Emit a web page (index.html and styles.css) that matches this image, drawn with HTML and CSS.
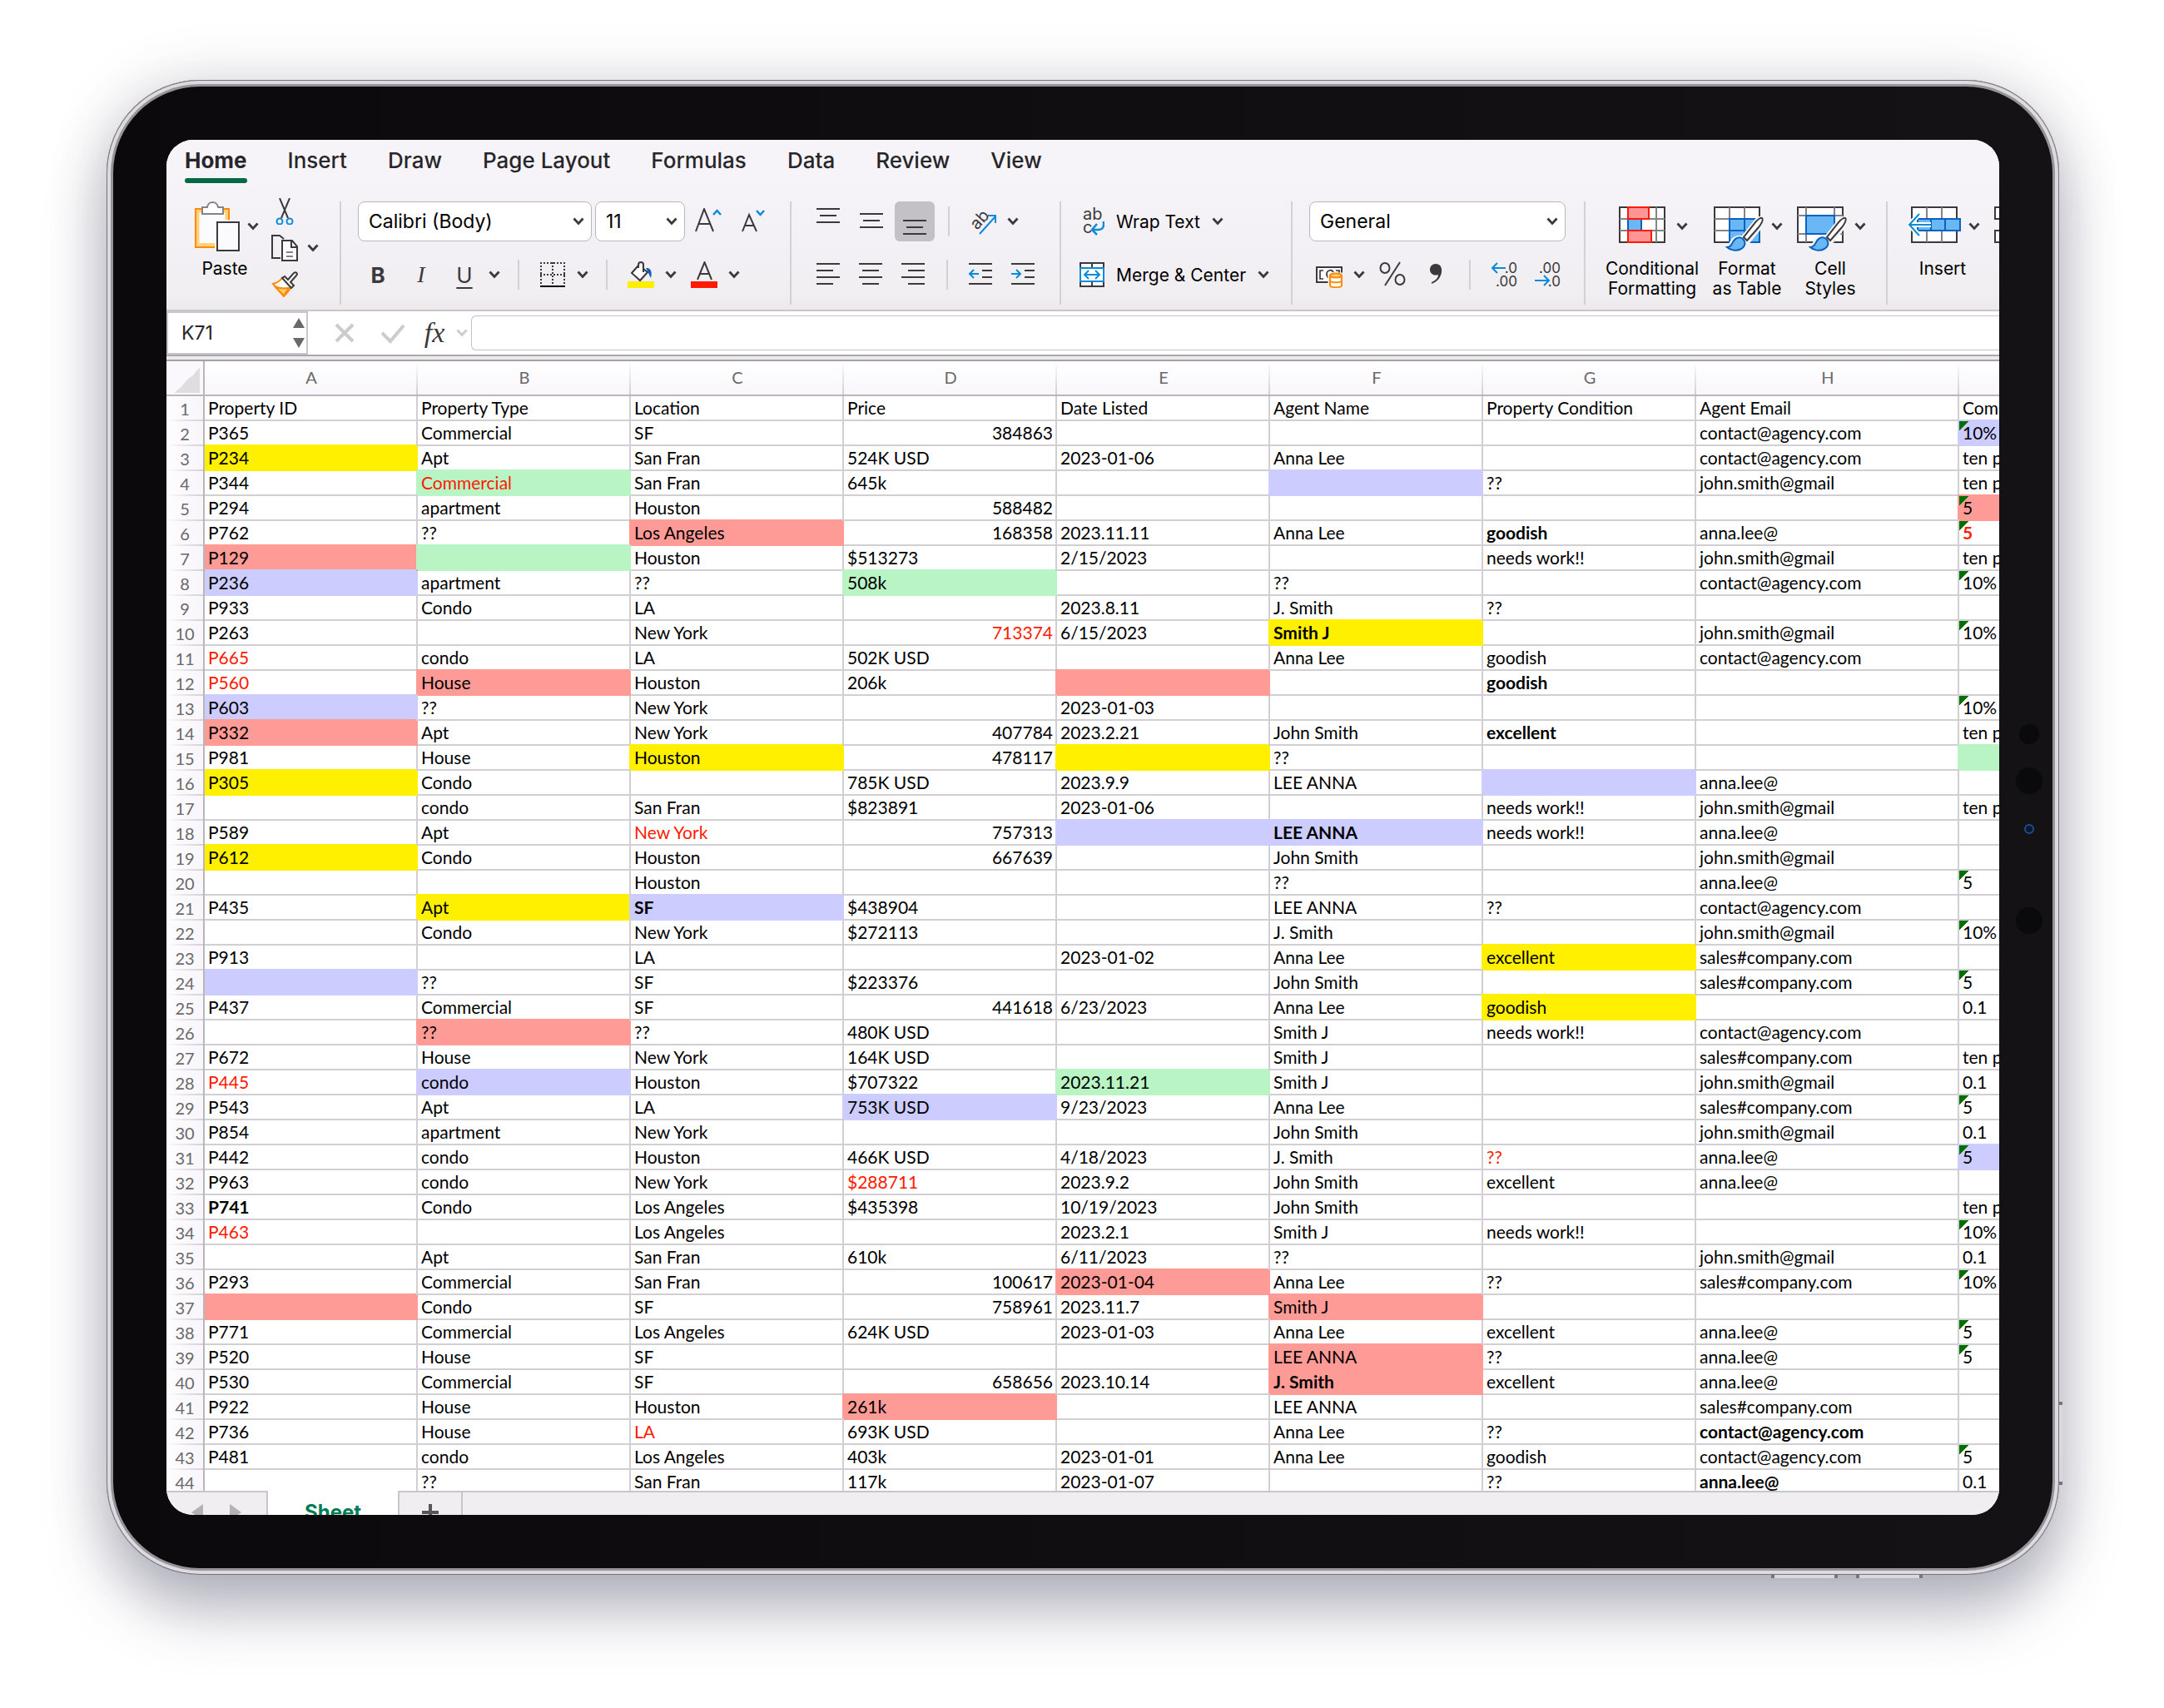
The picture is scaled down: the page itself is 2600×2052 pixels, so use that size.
FILE: index.html
```html
<!DOCTYPE html>
<html lang="en">
<head>
<meta charset="utf-8">
<title>Property listings</title>
<link rel="stylesheet" href="styles.css">
</head>
<body>
<svg width="0" height="0" class="defs" aria-hidden="true">
  <symbol id="chev" viewBox="0 0 14 10"><path d="M1.500 1.500 7 7.500 12.500 1.500" fill="none" stroke="currentColor" stroke-width="2.800"/></symbol>
  <symbol id="brush" viewBox="0 0 46 42">
    <path d="M45 1c2 3-1 8-4 12L27 30l-5-5L38 5c3-3 5-5 7-4z" fill="#fff" stroke="#f5f3f6" stroke-width="6"/>
    <path d="M1 37c5 0 5-3 7-6 3-6 9-7 13-4 4 4 3 9-2 12-6 3-14 2-18-2z" fill="#fff" stroke="#f5f3f6" stroke-width="5"/>
    <path d="M44 2c2 2-1 7-4 11L26 29l-4-4L37 6c3-3 6-5 7-4z" fill="#fff" stroke="#3b393c" stroke-width="2"/>
    <path d="M2 37c5 0 5-3 7-6 3-6 8-7 12-4 4 4 3 9-2 12-6 3-13 2-17-2z" fill="#69b8f5" stroke="#0a62c0" stroke-width="2"/>
  </symbol>
</svg>
<div class="device">
  <div class="sensors"><i></i><i class="big"></i><i class="led"></i><i class="big"></i></div>
  <div class="key key-side"></div>
  <div class="key key-down"></div>
  <div class="key key-up"></div>
  <main class="app">
    <nav class="tabs" aria-label="Ribbon">
      <button class="tab active">Home</button>
      <button class="tab">Insert</button>
      <button class="tab">Draw</button>
      <button class="tab">Page Layout</button>
      <button class="tab">Formulas</button>
      <button class="tab">Data</button>
      <button class="tab">Review</button>
      <button class="tab">View</button>
    </nav>

    <div class="ribbon">
      <section class="group" aria-label="Clipboard">
        <button class="big-tool">
          <span class="big-icon">
            <svg width="56" height="60" viewBox="0 0 56 60">
              <path d="M3 9h40v46H3z" fill="#fbfafc"/>
              <path d="M10 11.500H5.500v40.500h20.500M36 11.500h4.500V22" fill="none" stroke="#ffd27a" stroke-width="4"/>
              <path d="M10 9H3v46h23M36 9h7v13" fill="none" stroke="#ff8a00" stroke-width="2"/>
              <path d="M11 15V7h6c1-8 12-8 13 0h6v8z" fill="#fff" stroke="#858388" stroke-width="2"/>
              <path d="M29 25h26v34H29z" fill="#fbfafc" stroke="#3b393c" stroke-width="2"/>
            </svg>
            <svg class="chev"><use href="#chev"/></svg>
          </span>
          <span class="big-label">Paste</span>
        </button>
        <div class="stack">
          <button class="mini" aria-label="Cut">
            <svg width="32" height="32" viewBox="0 0 32 32" fill="none"><path d="M10 0 20 24M22 0 12 24" stroke="#3b393c" stroke-width="2"/><circle cx="10" cy="28" r="3.500" stroke="#0a8ad8" stroke-width="2"/><circle cx="22" cy="28" r="3.500" stroke="#0a8ad8" stroke-width="2"/></svg>
          </button>
          <span class="split"><button class="mini" aria-label="Copy">
            <svg width="32" height="32" viewBox="0 0 32 32" fill="#fbfafc" stroke="#3b393c" stroke-width="2"><path d="M11 28H1V1h9l5 4" fill="none"/><path d="M13 7h12l6 7v17H13z"/><path d="M24 7v8h7" fill="none"/><path d="M18 21h8M18 26h8" stroke="#858388"/></svg>
          </button><button class="drop" aria-label="Copy options"><svg class="chev"><use href="#chev"/></svg></button></span>
          <button class="mini" aria-label="Format painter">
            <svg width="32" height="32" viewBox="0 0 32 32"><path d="M13 8C10 12 6 14 2 15l13 15c3-3 7-7 9-12z" fill="#fff" stroke="#ff8a00" stroke-width="2"/><path d="M4 18c4 2 10 3 17 2l-6 9z" fill="#ffd27a" stroke="#ff8a00" stroke-width="2"/><path d="M13 8l3-2 4 4 7-8c3-2 5 1 3 3l-7 8 4 4-3 3z" fill="#fff" stroke="#3b393c" stroke-width="2"/></svg>
          </button>
        </div>
      </section>

      <section class="group rows font" aria-label="Font">
        <div class="row">
          <label class="pick font-name"><select aria-label="Font"><option>Calibri (Body)</option></select><svg class="chev"><use href="#chev"/></svg></label>
          <label class="pick font-size"><select aria-label="Font size"><option>11</option></select><svg class="chev"><use href="#chev"/></svg></label>
          <button class="tool" aria-label="Increase font size"><svg width="32" height="32" viewBox="0 0 32 32" fill="none" stroke="#3b393c" stroke-width="2"><path d="M1 28 11 1l11 27M5 19h13"/><path d="M22 8l4.500-5L31 8" stroke="#0a8ad8" stroke-width="2.500"/></svg></button>
          <button class="tool" aria-label="Decrease font size"><svg width="32" height="32" viewBox="0 0 32 32" fill="none" stroke="#3b393c" stroke-width="2"><path d="M5 28l8-20 9 20M8 21h11"/><path d="M22 3l4.500 5L31 3" stroke="#0a8ad8" stroke-width="2.500"/></svg></button>
        </div>
        <div class="row">
          <button class="tool glyph bold">B</button>
          <button class="tool glyph ital">I</button>
          <span class="split"><button class="tool glyph under">U</button><button class="drop" aria-label="Underline options"><svg class="chev"><use href="#chev"/></svg></button></span>
          <span class="bar"></span>
          <span class="split"><button class="tool" aria-label="Borders"><svg width="32" height="32" viewBox="0 0 32 32" fill="none" stroke="#3b393c" stroke-width="2"><path d="M1 2h30M1 16h30M2 1v26M16 1v26M30 1v26" stroke-dasharray="2 2"/><path d="M1 30h30" stroke="#000"/></svg></button><button class="drop" aria-label="Border options"><svg class="chev"><use href="#chev"/></svg></button></span>
          <span class="bar"></span>
          <span class="split"><button class="tool" aria-label="Fill colour"><svg width="32" height="32" viewBox="0 0 32 32"><path d="M0 24h32v8H0z" fill="#ffee00"/><path d="M22 8c6-1 8 5 6 12-2-3-3-7-6-12z" fill="#0a62c0"/><path d="M13 5 5 14l10 9 9-10-5-4" fill="#fff" stroke="#3b393c" stroke-width="2"/><path d="M13 8V4c0-4 6-4 6 0v9" fill="none" stroke="#3b393c" stroke-width="2"/></svg></button><button class="drop" aria-label="Fill options"><svg class="chev"><use href="#chev"/></svg></button></span>
          <span class="split"><button class="tool" aria-label="Font colour"><svg width="32" height="32" viewBox="0 0 32 32"><path d="M0 24h32v8H0z" fill="#ff1a00"/><path d="M8 22 16.500 1 25 22M11 15h11" fill="none" stroke="#3b393c" stroke-width="2"/></svg></button><button class="drop" aria-label="Font colour options"><svg class="chev"><use href="#chev"/></svg></button></span>
        </div>
      </section>

      <section class="group rows align" aria-label="Alignment">
        <div class="row">
          <button class="tool" aria-label="Top align"><svg class="lines" viewBox="0 0 28 32"><path d="M0 1h28M4 9h20M0 17h28"/></svg></button>
          <button class="tool" aria-label="Middle align"><svg class="lines" viewBox="0 0 28 32"><path d="M0 7h28M4 15h20M0 23h28"/></svg></button>
          <button class="tool pressed" aria-label="Bottom align" aria-pressed="true"><svg class="lines" viewBox="0 0 28 32"><path d="M0 15h28M4 23h20M0 31h28"/></svg></button>
          <span class="bar"></span>
          <span class="split"><button class="tool" aria-label="Orientation"><svg width="32" height="32" viewBox="0 0 32 32" class="slant"><text x="0" y="0" transform="translate(9 27) rotate(-48)">ab</text><path d="M12 31 31 10M22 9h9v9" fill="none" stroke="#0a8ad8" stroke-width="2"/></svg></button><button class="drop" aria-label="Orientation options"><svg class="chev"><use href="#chev"/></svg></button></span>
        </div>
        <div class="row">
          <button class="tool" aria-label="Align left"><svg class="lines" viewBox="0 0 28 32"><path d="M0 3h28M0 11h20M0 19h28M0 27h20"/></svg></button>
          <button class="tool" aria-label="Align centre"><svg class="lines" viewBox="0 0 28 32"><path d="M0 3h28M4 11h20M0 19h28M4 27h20"/></svg></button>
          <button class="tool" aria-label="Align right"><svg class="lines" viewBox="0 0 28 32"><path d="M0 3h28M8 11h20M0 19h28M8 27h20"/></svg></button>
          <span class="bar"></span>
          <button class="tool" aria-label="Decrease indent"><svg class="lines" viewBox="0 0 28 32"><path d="M0 3h28M16 11h12M16 19h12M0 27h28"/><path class="blue" d="M12 15H1M6 10l-5 5 5 5"/></svg></button>
          <button class="tool" aria-label="Increase indent"><svg class="lines" viewBox="0 0 28 32"><path d="M0 3h28M16 11h12M16 19h12M0 27h28"/><path class="blue" d="M0 15h11M6 10l5 5-5 5"/></svg></button>
        </div>
      </section>

      <section class="group rows wrap" aria-label="Wrapping">
        <div class="row">
          <button class="wide"><svg width="32" height="34" viewBox="0 0 32 34" class="abc"><text x="6" y="15">ab</text><text x="6" y="31">c</text><path d="M31 17v4c0 4-3 6-6 6h-7M23 20l-6 7 6 6" fill="none" stroke="#0a8ad8" stroke-width="2.500"/></svg>Wrap Text<svg class="chev"><use href="#chev"/></svg></button>
        </div>
        <div class="row">
          <button class="wide"><svg width="32" height="32" viewBox="0 0 32 32" fill="#fff" stroke="#3b393c" stroke-width="2"><path d="M3 2h28v28H3zM17 2v28"/><path d="M3 8h28v16H3zM8 16h18M13 11l-5 5 5 5M21 11l5 5-5 5" stroke="#0a8ad8"/></svg>Merge &amp; Center<svg class="chev"><use href="#chev"/></svg></button>
        </div>
      </section>

      <section class="group rows number-group" aria-label="Number">
        <div class="row">
          <label class="pick number-format"><select aria-label="Number format"><option>General</option></select><svg class="chev"><use href="#chev"/></svg></label>
        </div>
        <div class="row">
          <span class="split"><button class="tool" aria-label="Currency"><svg width="32" height="32" viewBox="0 0 32 32" fill="none" stroke="#3b393c" stroke-width="2"><path d="M1 7h30v18H1z" fill="#fbfafc"/><path d="M9 11H5v10h4M16 20c-4-2-4-8 0-9 2-1 4 0 5 2M24 11h4v3" stroke-width="1.700"/><path d="M17 16v13c0 3 14 3 14 0V16z" stroke="#f5f3f6" stroke-width="5"/><path d="M17 17v12c0 3 14 3 14 0V17" stroke="#ff8a00" fill="#fff"/><path d="M17 23c0 3 14 3 14 0" stroke="#ff8a00"/><ellipse cx="24" cy="17" rx="7" ry="2.500" stroke="#ff8a00" fill="#ffd27a"/></svg></button><button class="drop" aria-label="Currency options"><svg class="chev"><use href="#chev"/></svg></button></span>
          <button class="tool" aria-label="Percent"><svg width="32" height="32" viewBox="0 0 32 32" fill="none" stroke="#3b393c" stroke-width="2"><ellipse cx="7" cy="8" rx="5.500" ry="6"/><ellipse cx="25" cy="22" rx="5.500" ry="6"/><path d="M25 1 7 29"/></svg></button>
          <button class="tool" aria-label="Comma style"><svg width="32" height="32" viewBox="0 0 32 32"><path d="M16 3c5 0 8 4 7 10-1 7-6 12-12 14v-2c5-2 8-5 8-9-6 2-10-2-10-6 0-4 3-7 7-7z" fill="#3b393c"/></svg></button>
          <span class="bar"></span>
          <button class="tool" aria-label="Increase decimals"><svg width="32" height="32" viewBox="0 0 32 32" class="dec"><text x="32" y="14">.0</text><text x="32" y="30">.00</text><path d="M18 8H3M8 2 2 8l6 6"/></svg></button>
          <button class="tool" aria-label="Decrease decimals"><svg width="32" height="32" viewBox="0 0 32 32" class="dec"><text x="32" y="14">.00</text><text x="32" y="30">.0</text><path d="M1 23h16M12 17l6 6-6 6"/></svg></button>
        </div>
      </section>

      <section class="group styles" aria-label="Styles">
        <button class="big-tool cond">
          <span class="big-icon">
            <svg width="60" height="60" viewBox="0 0 60 60" fill="#fff"><path d="M1 7h54v42H1z" stroke="#3b393c" stroke-width="2"/><path d="M1 21h54M1 35h54M11 7v42M45 7v42M36 7v14M36 35v14" stroke="#858388" stroke-width="2"/><path d="M28 22h16v12H28z"/><path d="M11 7h25v14H11zM11 35h28v14H11z" fill="#ff9497" stroke="#ff1a00" stroke-width="2"/><path d="M11 22h16v12H11z" fill="#69b8f5"/><path d="M11 22v12M27 22v12" stroke="#0a62c0" stroke-width="2"/></svg>
            <svg class="chev"><use href="#chev"/></svg>
          </span>
          <span class="big-label">Conditional<br>Formatting</span>
        </button>
        <button class="big-tool">
          <span class="big-icon">
            <svg width="60" height="60" viewBox="0 0 60 60" fill="#fff"><path d="M1 7h54v42H1z" stroke="#3b393c" stroke-width="2"/><path d="M1 21h54M1 35h18M19 7v42M37 7v14" stroke="#858388" stroke-width="2"/><path d="M19 21h36v28H19zM19 35h36M37 21v28" fill="#69b8f5" stroke="#0a62c0" stroke-width="2"/><use href="#brush" x="14" y="18" width="46" height="42"/></svg>
            <svg class="chev"><use href="#chev"/></svg>
          </span>
          <span class="big-label">Format<br>as Table</span>
        </button>
        <button class="big-tool">
          <span class="big-icon">
            <svg width="60" height="60" viewBox="0 0 60 60" fill="#fff"><path d="M1 7h54v42H1z" stroke="#3b393c" stroke-width="2"/><path d="M1 17h54M1 39h54M11 7v42M45 7v42" stroke="#858388" stroke-width="2"/><path d="M11 17h34v22H11z" fill="#69b8f5" stroke="#0a62c0" stroke-width="2"/><use href="#brush" x="14" y="18" width="46" height="42"/></svg>
            <svg class="chev"><use href="#chev"/></svg>
          </span>
          <span class="big-label">Cell<br>Styles</span>
        </button>
      </section>

      <section class="group last" aria-label="Cells">
        <button class="big-tool">
          <span class="big-icon">
            <svg width="64" height="60" viewBox="0 0 64 60" fill="#fff"><path d="M5 7h54v42H5z" stroke="#3b393c" stroke-width="2"/><path d="M23 7v42M41 7v42" stroke="#858388" stroke-width="2"/><path d="M12 21h51v14H12zM28 21v14M45 21v14" fill="#69b8f5" stroke="#0a62c0" stroke-width="2"/><path d="M28 28H3M14 15 2 28l12 13" fill="none" stroke="#fff" stroke-width="6"/><path d="M28 28H3M14 15 2 28l12 13" fill="none" stroke="#0a8ad8" stroke-width="2"/></svg>
            <svg class="chev"><use href="#chev"/></svg>
          </span>
          <span class="big-label">Insert</span>
        </button>
        <button class="big-tool next" aria-label="Delete">
          <span class="big-icon">
            <svg width="64" height="60" viewBox="0 0 64 60" fill="#fff" stroke="#3b393c" stroke-width="2"><path d="M1 7h54v14H1zM1 35h54v14H1z"/></svg>
          </span>
        </button>
      </section>
    </div>

    <div class="formula-bar">
      <label class="name-box"><input aria-label="Name box" value="K71"><svg width="14" height="36" viewBox="0 0 14 36" fill="#6a686c"><path d="M7 0l7 12H0zM0 24h14L7 36z"/></svg></label>
      <button class="fx-tool" aria-label="Cancel"><svg width="28" height="28" viewBox="0 0 28 28"><path d="M4 4l20 20M24 4 4 24" stroke="#cdcbce" stroke-width="4"/></svg></button>
      <button class="fx-tool" aria-label="Enter"><svg width="28" height="28" viewBox="0 0 28 28"><path d="M1 14l10 10L27 5" fill="none" stroke="#cdcbce" stroke-width="4"/></svg></button>
      <button class="fx">fx</button>
      <svg class="chev pale"><use href="#chev"/></svg>
      <input class="formula" aria-label="Formula">
    </div>

    <div class="sheet">
      <table>
        <colgroup><col class="c-num"><col><col><col><col><col><col><col><col class="c-mail"><col></colgroup>
        <thead><tr><th class="corner"></th><th>A</th><th>B</th><th>C</th><th>D</th><th>E</th><th>F</th><th>G</th><th>H</th><th></th></tr></thead>
        <tbody id="rows"></tbody>
      </table>
    </div>

    <div class="sheet-tabs">
      <div class="steps"><button aria-label="Previous sheet"><svg width="14" height="20"><path d="M14 0v20L0 10z"/></svg></button><button aria-label="Next sheet"><svg width="14" height="20"><path d="M0 0v20l14-10z"/></svg></button></div>
      <button class="sheet-tab">Sheet</button>
      <button class="add" aria-label="Add sheet"><svg width="20" height="20"><path d="M10 0v20M0 10h20" stroke="#58565a" stroke-width="4"/></svg></button>
    </div>
  </main>
</div>
<script src="rows.js"></script>
</body>
</html>
```
FILE: rows.js
```js
// One line per sheet row, cells split by ";".
// After "|": y/g/p/l = yellow, green, pink, lavender fill; r = red text; b = bold.
// C, J and S stand for the three addresses that repeat; T for "ten percent".
const data = `Property ID;Property Type;Location;Price;Date Listed;Agent Name;Property Condition;Agent Email;Commission
P365;Commercial;SF;384863;;;;C;10%|l
P234|y;Apt;San Fran;524K USD;2023-01-06;Anna Lee;;C;T
P344;Commercial|gr;San Fran;645k;;|l;??;J;T
P294;apartment;Houston;588482;;;;;5|p
P762;??;Los Angeles|p;168358;2023.11.11;Anna Lee;goodish|b;anna.lee@;5|rb
P129|p;|g;Houston;$513273;2/15/2023;;needs work!!;J;T
P236|l;apartment;??;508k|g;;??;;C;10%
P933;Condo;LA;;2023.8.11;J. Smith;??;;
P263;;New York;713374|r;6/15/2023;Smith J|yb;;J;10%
P665|r;condo;LA;502K USD;;Anna Lee;goodish;C;
P560|r;House|p;Houston;206k;|p;;goodish|b;;
P603|l;??;New York;;2023-01-03;;;;10%
P332|p;Apt;New York;407784;2023.2.21;John Smith;excellent|b;;T
P981;House;Houston|y;478117;|y;??;;;|g
P305|y;Condo;;785K USD;2023.9.9;LEE ANNA;|l;anna.lee@;
;condo;San Fran;$823891;2023-01-06;;needs work!!;J;T
P589;Apt;New York|r;757313;|l;LEE ANNA|lb;needs work!!;anna.lee@;
P612|y;Condo;Houston;667639;;John Smith;;J;
;;Houston;;;??;;anna.lee@;5
P435;Apt|y;SF|lb;$438904;;LEE ANNA;??;C;
;Condo;New York;$272113;;J. Smith;;J;10%
P913;;LA;;2023-01-02;Anna Lee;excellent|y;S;
|l;??;SF;$223376;;John Smith;;S;5
P437;Commercial;SF;441618;6/23/2023;Anna Lee;goodish|y;;0.1
;??|p;??;480K USD;;Smith J;needs work!!;C;
P672;House;New York;164K USD;;Smith J;;S;T
P445|r;condo|l;Houston;$707322;2023.11.21|g;Smith J;;J;0.1
P543;Apt;LA;753K USD|l;9/23/2023;Anna Lee;;S;5
P854;apartment;New York;;;John Smith;;J;0.1
P442;condo;Houston;466K USD;4/18/2023;J. Smith;??|r;anna.lee@;5|l
P963;condo;New York;$288711|r;2023.9.2;John Smith;excellent;anna.lee@;
P741|b;Condo;Los Angeles;$435398;10/19/2023;John Smith;;;T
P463|r;;Los Angeles;;2023.2.1;Smith J;needs work!!;;10%
;Apt;San Fran;610k;6/11/2023;??;;J;0.1
P293;Commercial;San Fran;100617;2023-01-04|p;Anna Lee;??;S;10%
|p;Condo;SF;758961;2023.11.7;Smith J|p;;;
P771;Commercial;Los Angeles;624K USD;2023-01-03;Anna Lee;excellent;anna.lee@;5
P520;House;SF;;;LEE ANNA|p;??;anna.lee@;5
P530;Commercial;SF;658656;2023.10.14;J. Smith|pb;excellent;anna.lee@;
P922;House;Houston;261k|p;;LEE ANNA;;S;
P736;House;LA|r;693K USD;;Anna Lee;??;C|b;
P481;condo;Los Angeles;403k;2023-01-01;Anna Lee;goodish;C;5
;??;San Fran;117k;2023-01-07;;??;anna.lee@|b;0.1`;

const short = { C: 'contact@agency.com', J: 'john.smith@gmail', S: 'sales#company.com', T: 'ten percent' };
const names = { y: 'yellow', g: 'green', p: 'pink', l: 'lavender', r: 'red', b: 'strong' };
const body = document.getElementById('rows');

data.split('\n').forEach((line, i) => {
  const tr = body.insertRow();
  const head = document.createElement('th');
  head.scope = 'row';
  head.textContent = i + 1;
  tr.append(head);
  line.split(';').forEach((cell, col) => {
    const [text, marks = ''] = cell.split('|');
    const td = tr.insertCell();
    td.textContent = short[text] || text;
    for (const m of marks) td.classList.add(names[m]);
    if (col === 3 && /^\d+$/.test(text)) td.classList.add('number');
    if (col === 8 && /^(10%|5)$/.test(text)) td.classList.add('flag');
  });
});
```
FILE: styles.css
```css
* { box-sizing: border-box; }

body {
  margin: 0;
  height: 100vh;
  padding: 96px 126px 160px 128px;
  display: flex;
  background: #fff;
  font-family: Inter, "Liberation Sans", sans-serif;
  font-size: 21px;
  color: #000;
  overflow: hidden;
}
button { border: 0; background: none; padding: 0; font: inherit; color: inherit; }
input, select { font: inherit; color: inherit; border: 0; outline: 0; background: none; }
.defs { position: absolute; }

/* tablet body */
.device {
  position: relative;
  flex: 1;
  min-width: 0;
  padding: 72px;
  border-radius: 112px;
  background: linear-gradient(90deg, #0b090c, #141214);
  box-shadow:
    inset 0 0 0 1px #77757b,
    inset 0 0 0 5px #dddbdf,
    inset 0 0 0 8px #96949a,
    0 0 70px rgba(60, 60, 80, .18),
    0 44px 70px rgba(60, 60, 90, .34);
  display: flex;
}
.sensors {
  position: absolute;
  right: 20px;
  top: 774px;
  width: 32px;
  display: flex;
  flex-direction: column;
  align-items: center;
  gap: 28px;
}
.sensors i { width: 24px; height: 24px; border-radius: 50%; background: #0a090b; }
.sensors .big { width: 32px; height: 32px; }
.sensors .led { width: 12px; height: 12px; border: 2px solid #17508a; background: #0a1830; margin: 8px 0 60px; }
.key { position: absolute; background: #d9d7dc; border: solid #77757b; border-width: 0 4px; }
.key-side { right: -4px; bottom: 108px; width: 4px; height: 100px; border-width: 4px 0; }
.key-down, .key-up { bottom: -4px; height: 4px; width: 80px; }
.key-down { right: 266px; }
.key-up { right: 164px; }

.app {
  flex: 1;
  min-width: 0;
  display: flex;
  flex-direction: column;
  border-radius: 32px;
  overflow: hidden;
  background: #fff;
}

/* ribbon tabs */
.tabs { flex: none; display: flex; gap: 49px; padding: 7px 22px 0; height: 56px; background: #f6f4f8; }
.tab { height: 45px; padding-bottom: 9px; font-size: 26px; line-height: 36px; font-weight: 500; color: #28262a; white-space: nowrap; position: relative; }
.tab.active { font-weight: 700; }
.tab.active::after { content: ""; position: absolute; left: 0; right: 0; bottom: 0; height: 6px; border-radius: 3px; background: #006a43; }

/* ribbon */
.ribbon {
  flex: none;
  display: flex;
  align-items: flex-start;
  padding: 18px 0 6px 24px;
  background: linear-gradient(#f5f3f7, #f0eef1 90%, #ebe9ec);
  border-bottom: 2px solid #c8c6ca;
  overflow: hidden;
}
.group { flex: none; display: flex; height: 124px; padding-right: 20px; margin-right: 20px; border-right: 2px solid #d3d1d5; }
.group.font { width: 521px; }
.group.align { width: 304px; }
.group.wrap { width: 258px; }
.group.number-group { width: 332px; }
.group.styles { width: 343px; padding: 0; }
.group.last { border: 0; }
.rows { flex-direction: column; gap: 16px; }
.row { display: flex; align-items: center; gap: 4px; height: 48px; }
.split { display: flex; align-items: center; }
.tool { width: 48px; height: 48px; display: flex; align-items: center; justify-content: center; border-radius: 6px; }
.tool.pressed { background: #c3c1c5; }
.drop { width: 24px; height: 32px; display: flex; align-items: center; justify-content: center; }
.chev { width: 14px; height: 10px; flex: none; color: #3b393c; }
.pale { color: #cdcbce; }
.bar { width: 2px; height: 36px; margin: 0 12px; background: #d3d1d5; }

.stack { display: flex; flex-direction: column; justify-content: space-between; height: 124px; margin: -6px 0 0; align-items: flex-start; }
.mini { width: 36px; height: 36px; display: flex; align-items: center; justify-content: center; }
.stack .drop { margin-left: 4px; }

.big-tool { width: 100px; display: flex; flex-direction: column; align-items: center; }
.big-tool.cond { width: 128px; }
.big-tool.next { align-items: flex-start; margin-left: 8px; }
.big-icon { display: flex; align-items: center; gap: 9px; padding-right: 5px; height: 60px; }
.big-label { margin-top: 9px; padding-right: 8px; line-height: 24px; text-align: center; white-space: nowrap; }

.pick { position: relative; display: flex; align-items: center; height: 48px; background: #fff; border: 1px solid #b9b7bb; border-radius: 8px; }
.pick select { appearance: none; width: 100%; height: 44px; padding: 0 12px; font-size: 23px; }
.pick .chev { position: absolute; right: 8px; pointer-events: none; }
.font-name { width: 281px; }
.font-size { width: 108px; }
.number-format { width: 308px; }

.glyph { font-size: 26px; color: #3b393c; }
.bold { font-weight: 700; }
.ital { font-family: "Liberation Serif", serif; font-style: italic; font-size: 28px; }
.under { text-decoration: underline; text-underline-offset: 5px; }
.lines { width: 28px; height: 32px; fill: none; stroke: #3b393c; stroke-width: 2; }
.lines .blue { stroke: #0a8ad8; }
.slant text, .abc text { font-size: 20px; fill: #3b393c; }
.dec text { font-size: 17px; fill: #3b393c; text-anchor: end; }
.dec path { fill: none; stroke: #0a8ad8; stroke-width: 2; }
.wide { display: flex; align-items: center; gap: 14px; height: 48px; white-space: nowrap; }

/* formula bar */
.formula-bar { flex: none; display: flex; align-items: center; height: 52px; background: #fff; }
.name-box { width: 170px; height: 52px; display: flex; align-items: center; justify-content: space-between; padding: 0 2px 0 16px; border: 2px solid #c8c6ca; }
.name-box input { width: 120px; padding: 0; font-size: 23px; color: #28262a; }
.fx-tool { width: 58px; display: flex; justify-content: flex-end; }
.fx { width: 62px; font-family: "Liberation Serif", serif; font-style: italic; font-size: 34px; line-height: 40px; color: #3b393c; padding-left: 10px; }
.formula { flex: 1; min-width: 0; height: 42px; margin-left: 4px; border: 1px solid #c3c1c5; border-right: 0; border-radius: 6px 0 0 6px; }

/* grid */
.sheet { flex: 1; min-height: 0; overflow: hidden; border-top: 2px solid #aaa8ac; background: #fff; }
.sheet::before { content: ""; display: block; height: 4px; background: #eceaed; border-bottom: 2px solid #a3a1a5; }
table { table-layout: fixed; width: 2410px; border-collapse: separate; border-spacing: 0; font-family: Lato, "Liberation Sans", sans-serif; }
col { width: 256px; }
.c-num { width: 46px; }
.c-mail { width: 316px; }
th { padding: 0; font-weight: 400; color: #6a686c; font-size: 20px; line-height: 28px; }
thead th {
  height: 42px;
  padding-bottom: 2px;
  border-bottom: 2px solid #b9b7bb;
  background: linear-gradient(#fff0, #d3d1d5) right / 2px 100% no-repeat, linear-gradient(#fff, #f8f6fa);
}
thead .corner {
  border-right: 2px solid #b9b7bb;
  background: linear-gradient(135deg, #fff0 50%, #dfdde0 50%) 10px 8px / 30px 30px no-repeat, #faf8fc;
}
tbody th {
  position: relative;
  z-index: 1;
  border-right: 2px solid #b9b7bb;
  background: linear-gradient(90deg, #fff0, #d3d1d5) bottom / 100% 2px no-repeat, linear-gradient(90deg, #fdfcfe, #f8f6fa);
}
td {
  height: 30px;
  padding: 0 3px 0 4px;
  border-right: 2px solid #d1cfd2;
  border-bottom: 2px solid #d1cfd2;
  font-size: 21px;
  line-height: 28px;
  white-space: nowrap;
  overflow: hidden;
}
.number { text-align: right; }
.yellow, .green, .pink, .lavender { position: relative; border-color: var(--fill); background-color: var(--fill); box-shadow: -2px -2px 0 var(--fill); }
.yellow { --fill: #fff000; }
.green { --fill: #b9f4c5; }
.pink { --fill: #ff9b96; }
.lavender { --fill: #ccccff; }
.red { color: #ff1a00; }
.strong { font-weight: 700; }
.flag { background-image: linear-gradient(135deg, #007000 8px, #fff0 8px); }

/* sheet tabs */
.sheet-tabs { flex: none; display: flex; height: 29px; overflow: hidden; background: #f0eef1; }
.sheet-tabs > * { height: 50px; border-top: 2px solid #c8c6ca; }
.sheet-tabs::after { content: ""; flex: 1; border-top: 2px solid #c8c6ca; }
.steps { width: 122px; display: flex; align-items: center; gap: 32px; padding-left: 30px; border-right: 2px solid #c8c6ca; fill: #b3b1b5; }
.steps button { display: flex; }
.sheet-tabs .sheet-tab { width: 156px; border-top: 0; background: #fff; font-size: 24px; font-weight: 700; color: #007a55; }
.add { width: 78px; display: flex; align-items: center; justify-content: center; border: solid #c8c6ca; border-width: 2px 2px 0; }
```
